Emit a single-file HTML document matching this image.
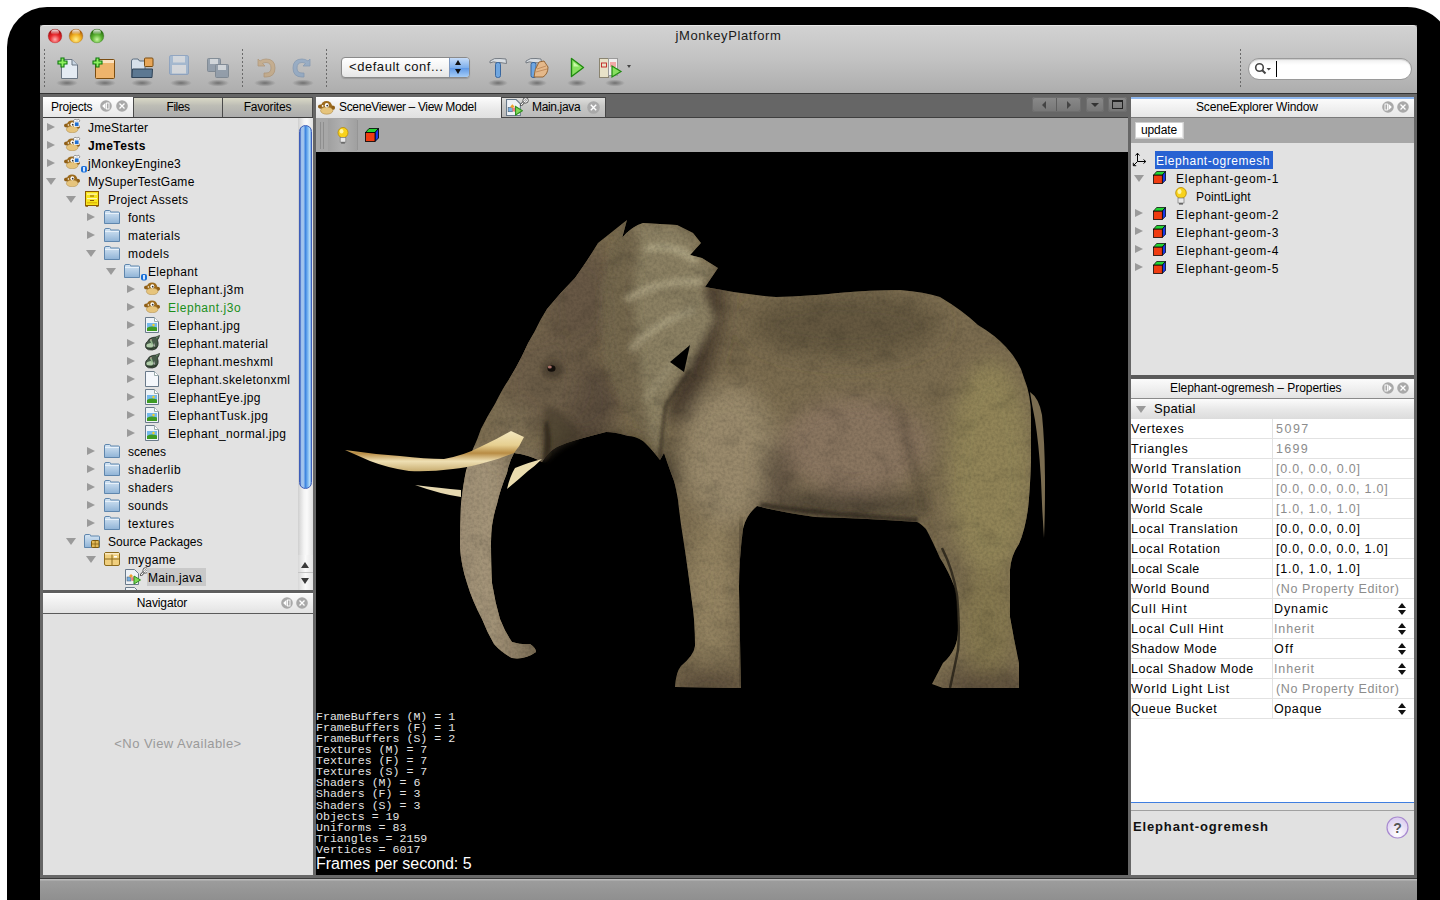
<!DOCTYPE html>
<html><head><meta charset="utf-8">
<style>
*{margin:0;padding:0;box-sizing:border-box}
html,body{width:1440px;height:900px;overflow:hidden;background:#fff;font-family:"Liberation Sans",sans-serif;}
body div,body span,body svg{position:absolute}
.t{font-size:12px;color:#000;white-space:nowrap;line-height:18px;letter-spacing:.3px}
.sep{width:1px;background-image:linear-gradient(#6a6a6a 50%,transparent 50%);background-size:1px 4px}
.ra{width:0;height:0;border-left:8px solid #9a9a9a;border-top:4.5px solid transparent;border-bottom:4.5px solid transparent}
.da{width:0;height:0;border-top:7.5px solid #9a9a9a;border-left:5px solid transparent;border-right:5px solid transparent}
</style></head><body>
<svg width="0" height="0" style="left:0;top:0">
<defs>
<linearGradient id="gfold" x1="0" y1="0" x2="0" y2="1"><stop offset="0" stop-color="#d6e6f4"/><stop offset="1" stop-color="#8fb3d6"/></linearGradient>
<symbol id="monkey" viewBox="0 0 16 13">
<ellipse cx="13.3" cy="6.8" rx="2.7" ry="2.1" fill="#8f5e16"/>
<ellipse cx="2.6" cy="5.6" rx="2.6" ry="2" fill="#8f5e16"/>
<ellipse cx="8" cy="5.2" rx="5.2" ry="4.8" fill="#9c6a1c"/>
<ellipse cx="8.2" cy="9.4" rx="5.8" ry="3.4" fill="#e6c47c" stroke="#a8823c" stroke-width=".5"/>
<ellipse cx="8.3" cy="4.3" rx="1.9" ry="2.1" fill="#fff"/><circle cx="8.7" cy="4.7" r=".9" fill="#333"/>
<circle cx="4.4" cy="5" r=".8" fill="#fff"/>
</symbol>
<symbol id="badge" viewBox="0 0 8 9">
<rect x="1" y="2" width="6" height="6.5" rx="2" fill="#1a6fd8"/><rect x="3" y="3" width="2" height="4.5" fill="#cfe4ff"/>
</symbol>
<symbol id="jbadge" viewBox="0 0 9 9">
<path d="M1 3 Q3 0 5 2 Q7 0 8 3 L7 4 L2 4Z" fill="#fff" stroke="#555" stroke-width=".6"/>
<rect x="2.5" y="4" width="4.5" height="4.5" fill="#1e6fd0" stroke="#fff" stroke-width=".8"/>
</symbol>
<symbol id="cab" viewBox="0 0 14 16">
<rect x="0.5" y="0.5" width="13" height="14" fill="#f7e41a" stroke="#8a5a00"/>
<rect x="0.5" y="14" width="2.5" height="1.8" fill="#8a5a00"/><rect x="11" y="14" width="2.5" height="1.8" fill="#8a5a00"/>
<rect x="2" y="2.5" width="10" height="1.2" fill="#fff7b8"/><rect x="2" y="7" width="10" height="1.2" fill="#fff7b8"/>
<rect x="5" y="4.5" width="4" height="1" fill="#8a5a00"/><rect x="5" y="9" width="4" height="1" fill="#8a5a00"/>
<rect x="2" y="11.3" width="10" height="1" fill="#d9a900"/>
</symbol>
<symbol id="folder" viewBox="0 0 16 14">
<path d="M0.5 2 Q0.5 0.5 2 0.5 L5.5 0.5 Q6.5 0.5 6.5 1.5 L6.5 2 L14.5 2 Q15.5 2 15.5 3 L15.5 13.5 L0.5 13.5Z" fill="url(#gfold)" stroke="#5f86ad"/>
<rect x="1" y="3" width="14" height="1" fill="#e8f1fa"/>
</symbol>
<symbol id="img" viewBox="0 0 14 16">
<path d="M0.5 0.5 L9.5 0.5 L13.5 4.5 L13.5 15.5 L0.5 15.5Z" fill="#eef3f8" stroke="#6a7a8a"/>
<path d="M9.5 0.5 L9.5 4.5 L13.5 4.5" fill="#fff" stroke="#9aa"/>
<rect x="2" y="6" width="10" height="8" fill="#74b8ea"/><path d="M2 11 Q6 8.5 12 10.5 L12 14 L2 14Z" fill="#3d9a22"/><circle cx="8.5" cy="8" r="1.2" fill="#f5d020"/>
</symbol>
<symbol id="ogre" viewBox="0 0 16 16">
<path d="M1.5 10 Q1.5 7.5 3.5 6.5 Q5 3 8.5 2.5 L12 2 L15.5 0.5 Q15 3 13.5 5 Q14.5 8 14 10.5 Q13 14.5 8.5 15 Q3.5 15.5 2 13 Q1.2 11.5 1.5 10Z" fill="#465a48" stroke="#141a14" stroke-width=".7"/>
<ellipse cx="6" cy="10.3" rx="3.6" ry="2.2" fill="#b2ceaa" transform="rotate(-10 6 10.3)"/>
<path d="M6.5 5 Q8 7 8 9.5" stroke="#8fb48a" stroke-width="1.6" fill="none"/>
<path d="M10 7.5 L11.2 11.5 L9.6 11.5Z" fill="#b0b0b0"/>
<path d="M12 3 L14.5 1.5" stroke="#7aa07a" stroke-width=".8"/>
<circle cx="7" cy="4.8" r=".7" fill="#d8a8a0"/>
<path d="M3 13 Q8 14.5 13 12" stroke="#22301f" stroke-width=".8" fill="none"/>
</symbol>
<symbol id="page" viewBox="0 0 14 16">
<path d="M0.5 0.5 L9.5 0.5 L13.5 4.5 L13.5 15.5 L0.5 15.5Z" fill="#f4f7fb" stroke="#6a7a8a"/>
<path d="M9.5 0.5 L9.5 4.5 L13.5 4.5" fill="#fff" stroke="#9aa"/>
</symbol>
<symbol id="pkg" viewBox="0 0 16 14">
<rect x="0.5" y="0.5" width="15" height="13" rx="1.5" fill="#f0cf7e" stroke="#8c6a1c"/>
<path d="M8 0.5 V13.5 M0.5 7 H15.5" stroke="#8c6a1c"/><rect x="1" y="1" width="14" height="1.5" fill="#fbeac0"/><rect x="10" y="4" width="3" height="1.5" fill="#fff"/>
</symbol>
<symbol id="srcpkg" viewBox="0 0 16 14">
<path d="M0.5 2 Q0.5 0.5 2 0.5 L5.5 0.5 Q6.5 0.5 6.5 1.5 L6.5 2 L14.5 2 Q15.5 2 15.5 3 L15.5 13.5 L0.5 13.5Z" fill="url(#gfold)" stroke="#5f86ad"/>
<rect x="7.5" y="6.5" width="7.5" height="7" rx="1" fill="#e3bb58" stroke="#7c5a10"/><path d="M11.2 6.5 V13.5 M7.5 10 H15" stroke="#7c5a10" stroke-width=".7"/>
</symbol>
<symbol id="java" viewBox="0 0 16 16">
<path d="M0.5 0.5 L9.5 0.5 L13.5 4.5 L13.5 15.5 L0.5 15.5Z" fill="#eef2f6" stroke="#6a7a8a"/>
<rect x="2" y="8" width="4" height="4" fill="#7ab0e0" stroke="#456" stroke-width=".5"/><path d="M6 5 L8 7 L6 9 L4 7Z" fill="#f0a030"/><circle cx="8" cy="10" r="2" fill="#f08080"/>
<path d="M9 7 L15.5 11 L9 15Z" fill="#7ed957" stroke="#2f8f1f"/>
</symbol>
<symbol id="wrench" viewBox="0 0 9 9"><path d="M3.8 5.2 L1.2 7.8" stroke="#333" stroke-width="2.6" stroke-linecap="round"/><path d="M3.8 5.2 L1.2 7.8" stroke="#fff" stroke-width="1.2" stroke-linecap="round"/><circle cx="5.6" cy="3.4" r="2.7" fill="#fff" stroke="#333" stroke-width=".8"/><circle cx="5.6" cy="3.4" r=".9" fill="#fff" stroke="#555" stroke-width=".6"/></symbol>
<symbol id="bulb" viewBox="0 0 12 18">
<ellipse cx="6" cy="6" rx="5.3" ry="5.5" fill="#f8d21c" stroke="#b88a00" stroke-width=".8"/><ellipse cx="4.5" cy="4.5" rx="2" ry="2.5" fill="#fff6a8"/>
<rect x="3" y="11" width="6" height="5" fill="#e8e8e8" stroke="#777" stroke-width=".7"/><rect x="4" y="16" width="4" height="1.6" fill="#666"/>
</symbol>
<symbol id="cube" viewBox="0 0 14 14">
<path d="M0.5 4.5 L4 0.5 L13.5 0.5 L10 4.5Z" fill="#22d433" stroke="#000" stroke-width=".8"/>
<path d="M10 4.5 L13.5 0.5 L13.5 10 L10 13.5Z" fill="#1838e8" stroke="#000" stroke-width=".8"/>
<rect x="0.5" y="4.5" width="9.5" height="9" fill="#f03c10" stroke="#000" stroke-width=".8"/>
</symbol>
<symbol id="closeb" viewBox="0 0 12 12"><circle cx="6" cy="6" r="5.8" fill="#a9a9a9"/><path d="M3.5 3.5 L8.5 8.5 M8.5 3.5 L3.5 8.5" stroke="#fff" stroke-width="1.3"/></symbol>
<symbol id="minb" viewBox="0 0 12 12"><circle cx="6" cy="6" r="5.8" fill="#a9a9a9"/><path d="M2.2 6 L5.5 2.8 L5.5 9.2Z" fill="#fff"/><rect x="6.5" y="3" width="2.5" height="6" fill="none" stroke="#fff" stroke-width=".9"/></symbol>
<symbol id="minb2" viewBox="0 0 12 12"><circle cx="6" cy="6" r="5.8" fill="#a9a9a9"/><path d="M9.8 6 L6.5 2.8 L6.5 9.2Z" fill="#fff"/><rect x="3" y="3" width="2.5" height="6" fill="none" stroke="#fff" stroke-width=".9"/></symbol>
</defs></svg>

<div style="left:7px;top:7px;width:1445px;height:950px;background:#000;border-radius:40px 45px 0 0"></div>
<div style="left:40px;top:25px;width:1377px;height:875px;background:#666"></div>
<div style="left:40px;top:25px;width:1377px;height:68px;background:linear-gradient(#d2d2d2,#c4c4c4 45%,#adadad);border-top:1px solid #e8e8e8;border-radius:4px 4px 0 0"></div>
<div style="left:40px;top:93px;width:1377px;height:1px;background:#333"></div>
<div class="t" style="left:0;top:27px;width:1457px;text-align:center;color:#1a1a1a;font-size:13px;letter-spacing:.6px">jMonkeyPlatform</div>
<div style="left:40px;top:875px;width:1377px;height:3px;background:#686868"></div><div style="left:40px;top:878px;width:1377px;height:1px;background:#3a3a3a"></div>
<div style="left:40px;top:879px;width:1377px;height:21px;background:linear-gradient(#bababa 0,#bababa 1px,#9c9c9c 2px,#8f8f8f)"></div>
<svg style="left:46px;top:27px" width="60" height="18" viewBox="0 0 60 18">
<defs>
<radialGradient id="tlr" cx=".5" cy=".75" r=".65"><stop offset="0" stop-color="#ffb0b0"/><stop offset=".55" stop-color="#e8282c"/><stop offset="1" stop-color="#a80c10"/></radialGradient>
<radialGradient id="tly" cx=".5" cy=".75" r=".65"><stop offset="0" stop-color="#fff090"/><stop offset=".55" stop-color="#f0b020"/><stop offset="1" stop-color="#b06008"/></radialGradient>
<radialGradient id="tlg" cx=".5" cy=".75" r=".65"><stop offset="0" stop-color="#c8f8a0"/><stop offset=".55" stop-color="#58b030"/><stop offset="1" stop-color="#2a7010"/></radialGradient>
<linearGradient id="tlh" x1="0" y1="0" x2="0" y2="1"><stop offset="0" stop-color="#fff" stop-opacity=".9"/><stop offset="1" stop-color="#fff" stop-opacity="0"/></linearGradient>
</defs>
<circle cx="9" cy="9" r="6.9" fill="url(#tlr)" stroke="#8a2020" stroke-width=".5" stroke-opacity=".5"/>
<circle cx="30" cy="9" r="6.9" fill="url(#tly)" stroke="#8a5010" stroke-width=".5" stroke-opacity=".5"/>
<circle cx="51" cy="9" r="6.9" fill="url(#tlg)" stroke="#206010" stroke-width=".5" stroke-opacity=".5"/>
<ellipse cx="9" cy="5.2" rx="4" ry="2.6" fill="url(#tlh)"/>
<ellipse cx="30" cy="5.2" rx="4" ry="2.6" fill="url(#tlh)"/>
<ellipse cx="51" cy="5.2" rx="4" ry="2.6" fill="url(#tlh)"/>
</svg>

<div class="sep" style="left:44px;top:49px;height:38px"></div>
<div class="sep" style="left:242px;top:49px;height:38px"></div>
<div class="sep" style="left:326px;top:49px;height:38px"></div>
<div class="sep" style="left:1240px;top:49px;height:38px"></div>
<!-- icon shadows -->
<svg style="left:50px;top:76px" width="590" height="14">
<defs><radialGradient id="sh"><stop offset="0" stop-color="#000" stop-opacity=".38"/><stop offset="1" stop-color="#000" stop-opacity="0"/></radialGradient></defs>
<ellipse cx="17" cy="7" rx="11" ry="3.5" fill="url(#sh)"/>
<ellipse cx="55" cy="7" rx="11" ry="3.5" fill="url(#sh)"/>
<ellipse cx="92" cy="7" rx="11" ry="3.5" fill="url(#sh)"/>
<ellipse cx="131" cy="7" rx="11" ry="3.5" fill="url(#sh)"/>
<ellipse cx="168" cy="7" rx="11" ry="3.5" fill="url(#sh)"/>
<ellipse cx="215" cy="7" rx="11" ry="3.5" fill="url(#sh)"/>
<ellipse cx="253" cy="7" rx="11" ry="3.5" fill="url(#sh)"/>
<ellipse cx="448" cy="7" rx="10" ry="3.5" fill="url(#sh)"/>
<ellipse cx="487" cy="7" rx="10" ry="3.5" fill="url(#sh)"/>
<ellipse cx="527" cy="7" rx="10" ry="3.5" fill="url(#sh)"/>
<ellipse cx="565" cy="7" rx="10" ry="3.5" fill="url(#sh)"/>
</svg>
<!-- new file -->
<svg style="left:57px;top:57px" width="22" height="22" viewBox="0 0 22 22">
<path d="M4.5 2.5 L15 2.5 L20.5 8 L20.5 21.5 L4.5 21.5Z" fill="#e4ebf3" stroke="#6b7683"/><path d="M15 2.5 L15 8 L20.5 8" fill="#c9d6e4" stroke="#6b7683"/>
<path d="M4 1 H7 V4 H10 V7 H7 V10 H4 V7 H1 V4 H4Z" fill="#8ff060" stroke="#0d7a0d" stroke-width="1.1"/>
</svg>
<!-- new project -->
<svg style="left:92px;top:57px" width="24" height="22" viewBox="0 0 24 22">
<rect x="3.5" y="2.5" width="19" height="19" rx="1" fill="#eeb46c" stroke="#7a4c10"/><rect x="4" y="3" width="18" height="3" fill="#fbe2c0"/>
<path d="M4 1 H7 V4 H10 V7 H7 V10 H4 V7 H1 V4 H4Z" fill="#8ff060" stroke="#0d7a0d" stroke-width="1.1"/>
</svg>
<!-- open project -->
<svg style="left:130px;top:56px" width="24" height="23" viewBox="0 0 24 23">
<path d="M1.5 5 Q1.5 3 3.5 3 L8 3 L9.5 5 L15 5 L15 21.5 L1.5 21.5Z" fill="#d6e0ea" stroke="#5d6e80"/>
<rect x="14.5" y="2" width="8.5" height="8.5" rx="1" fill="#e7a658" stroke="#7a4c10"/>
<path d="M2.5 13 L22.5 13 L22 21.5 L2 21.5Z" fill="#5c7892" stroke="#2f4256"/>
</svg>
<!-- save (disabled) -->
<svg style="left:168px;top:54px" width="22" height="22" viewBox="0 0 22 22" opacity=".55">
<rect x="1.5" y="1.5" width="19" height="19" rx="1.5" fill="#8fb3dc" stroke="#6b8fc0"/><rect x="5" y="2" width="12" height="6.5" fill="#e0e8f2"/><rect x="4" y="11" width="14" height="8.5" fill="#e8edf4"/>
</svg>
<!-- save all -->
<svg style="left:206px;top:57px" width="24" height="22" viewBox="0 0 24 22" opacity=".6">
<rect x="1.5" y="1.5" width="13" height="13" rx="1" fill="#7a8ca0" stroke="#5a6a7a"/><rect x="4" y="2" width="8" height="5" fill="#dde4ea"/>
<rect x="9.5" y="7.5" width="13" height="13" rx="1" fill="#7a8ca0" stroke="#5a6a7a"/><rect x="12" y="8" width="8" height="5" fill="#dde4ea"/>
</svg>
<!-- undo -->
<svg style="left:254px;top:56px" width="23" height="22" viewBox="0 0 23 22" opacity=".55">
<path d="M4 3 V10 H11 L8.5 7.5 Q10 6.5 12 6.5 Q17 6.5 17 12 Q17 17 12 17 L10 17 V21 L12 21 Q21 21 21 12 Q21 3 12 3 Q8.5 3 6 5Z" fill="#c9a06a" stroke="#a37a48" stroke-width=".8"/>
</svg>
<!-- redo -->
<svg style="left:291px;top:56px" width="23" height="22" viewBox="0 0 23 22" opacity=".55">
<path d="M19 3 V10 H12 L14.5 7.5 Q13 6.5 11 6.5 Q6 6.5 6 12 Q6 17 11 17 L13 17 V21 L11 21 Q2 21 2 12 Q2 3 11 3 Q14.5 3 17 5Z" fill="#7a9ec8" stroke="#5a7ea8" stroke-width=".8"/>
</svg>
<!-- config combo -->
<div style="left:341px;top:57px;width:129px;height:21px;border-radius:4px;border:1px solid #8a8a8a;background:linear-gradient(#ffffff,#f4f4f4 50%,#e6e6e6);box-shadow:0 1px 1px rgba(0,0,0,.15)"></div>
<div style="left:449px;top:58px;width:20px;height:19px;border-radius:0 3px 3px 0;background:linear-gradient(#c6dcf8,#7fb0ec 50%,#5e98e6 52%,#a6cdf6);border-left:1px solid #7d98c0"></div>
<div style="left:455px;top:60px;width:0;height:0;border-bottom:5px solid #111;border-left:3.5px solid transparent;border-right:3.5px solid transparent"></div>
<div style="left:455px;top:69px;width:0;height:0;border-top:5px solid #111;border-left:3.5px solid transparent;border-right:3.5px solid transparent"></div>
<div class="t" style="left:349px;top:58px;font-size:13px;letter-spacing:.55px;color:#111">&lt;default conf...</div>
<!-- build hammer -->
<svg style="left:488px;top:57px" width="20" height="21" viewBox="0 0 20 21">
<path d="M2 4 Q6 0.5 12 1.5 L18 2 L18.5 6.5 L12 5.5 L11 5.5 L9 5.5 Q5 4 2 6Z" fill="#d8dde2" stroke="#6c737a" stroke-width=".9"/>
<rect x="7.5" y="5.5" width="5" height="15" rx="2" fill="#6fa6e0" stroke="#2f5f9a" stroke-width=".9"/>
</svg>
<!-- clean build -->
<svg style="left:525px;top:57px" width="24" height="21" viewBox="0 0 24 21">
<path d="M1 4 Q5 0.5 11 1.5 L16 2 L16.5 6 L8 5.5 Q4 4 1 6Z" fill="#d8dde2" stroke="#6c737a" stroke-width=".9"/>
<rect x="6" y="5.5" width="5" height="15" rx="2" fill="#6fa6e0" stroke="#2f5f9a" stroke-width=".9"/>
<path d="M14 5 L19 4 L23 10 Q23 17 18 20 L9 20 Q9 13 14 5Z" fill="#e4b88a" stroke="#8d5c2a" stroke-width=".9"/>
<path d="M12 12 L21 9 M11 15 L22 12" stroke="#b98354" stroke-width=".8"/>
</svg>
<!-- run -->
<svg style="left:570px;top:57px" width="15" height="21" viewBox="0 0 15 21">
<path d="M1.5 1.5 L13.5 10.5 L1.5 19.5Z" fill="#88e060" stroke="#208a10" stroke-width="1.4" stroke-linejoin="round"/>
<path d="M3.5 5 L9 9.5 L3.5 9.5Z" fill="#c8f8a8"/>
</svg>
<!-- profile -->
<svg style="left:598px;top:56px" width="26" height="23" viewBox="0 0 26 23">
<rect x="1.5" y="2.5" width="9" height="19" fill="#e8e2c8" stroke="#8a8470"/><rect x="10.5" y="2.5" width="9" height="17" fill="#f0eeee" stroke="#9a9a9a"/>
<rect x="3.5" y="7" width="5" height="4" fill="none" stroke="#c02020" stroke-width=".9"/><rect x="12" y="6" width="6" height="5" fill="#f2a8a8"/>
<path d="M14 10 L23 15.5 L14 21Z" fill="#88e060" stroke="#208a10" stroke-width="1.2"/>
</svg>
<div style="left:627px;top:65px;width:0;height:0;border-top:3px solid #444;border-left:2.5px solid transparent;border-right:2.5px solid transparent"></div>
<!-- search -->
<div style="left:1248px;top:58px;width:164px;height:22px;border-radius:11px;background:linear-gradient(#eeeeee,#ffffff 30%);border:1px solid #9a9a9a;box-shadow:inset 0 1px 1px rgba(0,0,0,.15)"></div>
<svg style="left:1254px;top:62px" width="20" height="14" viewBox="0 0 20 14">
<circle cx="5.5" cy="5.5" r="3.8" fill="none" stroke="#444" stroke-width="1.6"/><path d="M8 8 L11.5 11.5" stroke="#444" stroke-width="2"/>
<path d="M12.5 6 L17 6 L14.75 8.5Z" fill="#444"/>
</svg>
<div style="left:1276px;top:61px;width:1px;height:16px;background:#000"></div>

<div style="left:43px;top:118px;width:270px;height:472px;background:#e2e2e2"></div>
<div style="left:43px;top:97px;width:90px;height:21px;background:linear-gradient(#fdfdfd,#e6e6e6);border-top:1px solid #fff"></div>
<div class="t" style="left:51px;top:98px;letter-spacing:-.25px">Projects</div>
<svg style="left:100px;top:100px" width="12" height="12"><use href="#minb"/></svg>
<svg style="left:116px;top:100px" width="12" height="12"><use href="#closeb"/></svg>
<div style="left:133px;top:97px;width:180px;height:21px;background:#4a4a4a"></div>
<div style="left:134px;top:98px;width:88px;height:19px;background:linear-gradient(#d9d8c6,#bdbdb5 40%,#acacac)"></div>
<div style="left:223px;top:98px;width:89px;height:19px;background:linear-gradient(#d9d8c6,#bdbdb5 40%,#acacac)"></div>
<div class="t" style="left:134px;top:98px;width:88px;text-align:center;letter-spacing:-.5px">Files</div>
<div class="t" style="left:223px;top:98px;width:89px;text-align:center;letter-spacing:-.2px">Favorites</div>
<div style="left:43px;top:117px;width:270px;height:1px;background:#3f3f3f"></div>
<div class="ra" style="left:47px;top:123px"></div>
<svg style="left:64px;top:120px" width="16" height="13"><use href="#monkey"/></svg>
<svg style="left:72px;top:118px" width="9" height="9"><use href="#jbadge"/></svg>
<div class="t" style="left:88px;top:119px;letter-spacing:0.146px">JmeStarter</div>
<div class="ra" style="left:47px;top:141px"></div>
<svg style="left:64px;top:138px" width="16" height="13"><use href="#monkey"/></svg>
<svg style="left:72px;top:136px" width="9" height="9"><use href="#jbadge"/></svg>
<div class="t" style="left:88px;top:137px;letter-spacing:0.417px;font-weight:bold">JmeTests</div>
<div class="ra" style="left:47px;top:159px"></div>
<svg style="left:64px;top:156px" width="16" height="13"><use href="#monkey"/></svg>
<svg style="left:72px;top:154px" width="9" height="9"><use href="#jbadge"/></svg>
<svg style="left:80px;top:164px" width="8" height="9"><use href="#badge"/></svg>
<div class="t" style="left:88px;top:155px;letter-spacing:0.313px">jMonkeyEngine3</div>
<div class="da" style="left:46px;top:178px"></div>
<svg style="left:64px;top:174px" width="16" height="13"><use href="#monkey"/></svg>
<div class="t" style="left:88px;top:173px;letter-spacing:0.257px">MySuperTestGame</div>
<div class="da" style="left:66px;top:196px"></div>
<svg style="left:85px;top:191px" width="14" height="16"><use href="#cab"/></svg>
<div class="t" style="left:108px;top:191px;letter-spacing:0.305px">Project Assets</div>
<div class="ra" style="left:87px;top:213px"></div>
<svg style="left:104px;top:210px" width="16" height="14"><use href="#folder"/></svg>
<div class="t" style="left:128px;top:209px;letter-spacing:0.246px">fonts</div>
<div class="ra" style="left:87px;top:231px"></div>
<svg style="left:104px;top:228px" width="16" height="14"><use href="#folder"/></svg>
<div class="t" style="left:128px;top:227px;letter-spacing:0.414px">materials</div>
<div class="da" style="left:86px;top:250px"></div>
<svg style="left:104px;top:246px" width="16" height="14"><use href="#folder"/></svg>
<div class="t" style="left:128px;top:245px;letter-spacing:0.463px">models</div>
<div class="da" style="left:106px;top:268px"></div>
<svg style="left:124px;top:264px" width="16" height="14"><use href="#folder"/></svg>
<svg style="left:140px;top:272px" width="8" height="9"><use href="#badge"/></svg>
<div class="t" style="left:148px;top:263px;letter-spacing:0.318px">Elephant</div>
<div class="ra" style="left:127px;top:285px"></div>
<svg style="left:144px;top:282px" width="16" height="13"><use href="#monkey"/></svg>
<div class="t" style="left:168px;top:281px;letter-spacing:0.523px">Elephant.j3m</div>
<div class="ra" style="left:127px;top:303px"></div>
<svg style="left:144px;top:300px" width="16" height="13"><use href="#monkey"/></svg>
<div class="t" style="left:168px;top:299px;letter-spacing:0.533px;color:#1a8f1a">Elephant.j3o</div>
<div class="ra" style="left:127px;top:321px"></div>
<svg style="left:145px;top:317px" width="14" height="16"><use href="#img"/></svg>
<div class="t" style="left:168px;top:317px;letter-spacing:0.479px">Elephant.jpg</div>
<div class="ra" style="left:127px;top:339px"></div>
<svg style="left:144px;top:335px" width="16" height="16"><use href="#ogre"/></svg>
<div class="t" style="left:168px;top:335px;letter-spacing:0.413px">Elephant.material</div>
<div class="ra" style="left:127px;top:357px"></div>
<svg style="left:144px;top:353px" width="16" height="16"><use href="#ogre"/></svg>
<div class="t" style="left:168px;top:353px;letter-spacing:0.419px">Elephant.meshxml</div>
<div class="ra" style="left:127px;top:375px"></div>
<svg style="left:145px;top:371px" width="14" height="16"><use href="#page"/></svg>
<div class="t" style="left:168px;top:371px;letter-spacing:0.417px">Elephant.skeletonxml</div>
<div class="ra" style="left:127px;top:393px"></div>
<svg style="left:145px;top:389px" width="14" height="16"><use href="#img"/></svg>
<div class="t" style="left:168px;top:389px;letter-spacing:0.357px">ElephantEye.jpg</div>
<div class="ra" style="left:127px;top:411px"></div>
<svg style="left:145px;top:407px" width="14" height="16"><use href="#img"/></svg>
<div class="t" style="left:168px;top:407px;letter-spacing:0.515px">ElephantTusk.jpg</div>
<div class="ra" style="left:127px;top:429px"></div>
<svg style="left:145px;top:425px" width="14" height="16"><use href="#img"/></svg>
<div class="t" style="left:168px;top:425px;letter-spacing:0.44px">Elephant_normal.jpg</div>
<div class="ra" style="left:87px;top:447px"></div>
<svg style="left:104px;top:444px" width="16" height="14"><use href="#folder"/></svg>
<div class="t" style="left:128px;top:443px;letter-spacing:-0.006px">scenes</div>
<div class="ra" style="left:87px;top:465px"></div>
<svg style="left:104px;top:462px" width="16" height="14"><use href="#folder"/></svg>
<div class="t" style="left:128px;top:461px;letter-spacing:0.487px">shaderlib</div>
<div class="ra" style="left:87px;top:483px"></div>
<svg style="left:104px;top:480px" width="16" height="14"><use href="#folder"/></svg>
<div class="t" style="left:128px;top:479px;letter-spacing:0.383px">shaders</div>
<div class="ra" style="left:87px;top:501px"></div>
<svg style="left:104px;top:498px" width="16" height="14"><use href="#folder"/></svg>
<div class="t" style="left:128px;top:497px;letter-spacing:0.259px">sounds</div>
<div class="ra" style="left:87px;top:519px"></div>
<svg style="left:104px;top:516px" width="16" height="14"><use href="#folder"/></svg>
<div class="t" style="left:128px;top:515px;letter-spacing:0.473px">textures</div>
<div class="da" style="left:66px;top:538px"></div>
<svg style="left:84px;top:534px" width="16" height="14"><use href="#srcpkg"/></svg>
<div class="t" style="left:108px;top:533px;letter-spacing:0.038px">Source Packages</div>
<div class="da" style="left:86px;top:556px"></div>
<svg style="left:104px;top:552px" width="16" height="14"><use href="#pkg"/></svg>
<div class="t" style="left:128px;top:551px;letter-spacing:0.337px">mygame</div>
<svg style="left:125px;top:569px" width="16" height="16"><use href="#java"/></svg>
<svg style="left:140px;top:567px" width="9" height="9"><use href="#wrench"/></svg>
<div style="left:147px;top:568px;width:59px;height:18px;background:#c9c9c9"></div>
<div class="t" style="left:148px;top:569px;letter-spacing:0.33px">Main.java</div>
<svg style="left:125px;top:587px" width="16" height="16"><use href="#java"/></svg>
<div style="left:43px;top:590px;width:270px;height:3px;background:#5e5e5e"></div>
<div style="left:298px;top:118px;width:15px;height:472px;background:linear-gradient(90deg,#cfcfcf,#f4f4f4 40%,#fafafa 60%,#e0e0e0)"></div>
<div style="left:299px;top:125px;width:13px;height:364px;border-radius:7px;background:linear-gradient(90deg,#3a5fc0 0,#9cc0ea 1.5px,#a7c8ee 30%,#3f86e0 50%,#86c0f4 75%,#b6dcf8 88%,#6aa0e0);border:1px solid #3d5db8"></div>
<div style="left:298px;top:555px;width:15px;height:35px;background:linear-gradient(90deg,#d8d8d8,#fafafa 50%,#e4e4e4)"></div>
<div style="left:298px;top:572px;width:15px;height:1px;background:#c4c4c4"></div>
<div style="left:301px;top:562px;width:0;height:0;border-bottom:6px solid #3a3a3a;border-left:4.5px solid transparent;border-right:4.5px solid transparent"></div>
<div style="left:301px;top:578px;width:0;height:0;border-top:6px solid #3a3a3a;border-left:4.5px solid transparent;border-right:4.5px solid transparent"></div>
<div style="left:43px;top:593px;width:270px;height:20px;background:linear-gradient(#fafafa,#e3e3e3);border-top:1px solid #fff"></div>
<div style="left:43px;top:613px;width:270px;height:1px;background:#5a5a5a"></div>
<div class="t" style="left:43px;top:594px;width:238px;text-align:center;letter-spacing:-.1px">Navigator</div>
<svg style="left:281px;top:597px" width="12" height="12"><use href="#minb"/></svg>
<svg style="left:296px;top:597px" width="12" height="12"><use href="#closeb"/></svg>
<div style="left:43px;top:614px;width:270px;height:261px;background:#e1e1e1"></div>
<div class="t" style="left:43px;top:735px;width:270px;text-align:center;color:#9a9a9a;font-size:13px;letter-spacing:.45px">&lt;No View Available&gt;</div>
<!-- editor tab strip -->
<div style="left:316px;top:117px;width:812px;height:1px;background:#3f3f3f"></div>
<div style="left:316px;top:97px;width:185px;height:21px;background:linear-gradient(#fbfbfb,#e8e8e8 60%,#e0e0e0);border-top:1px solid #fff"></div>
<svg style="left:318px;top:100px" width="17" height="15"><use href="#monkey"/></svg>
<div class="t" style="left:339px;top:98px;letter-spacing:-.35px">SceneViewer – View Model</div>
<div style="left:501px;top:97px;width:105px;height:21px;background:#454545"></div>
<div style="left:502px;top:98px;width:103px;height:19px;background:linear-gradient(#dededc,#c8c8c6 40%,#b9b9b9)"></div>
<svg style="left:506px;top:99px" width="17" height="17"><use href="#java"/></svg>
<svg style="left:520px;top:97px" width="9" height="9"><use href="#wrench"/></svg>
<div class="t" style="left:532px;top:98px;letter-spacing:-.35px">Main.java</div>
<svg style="left:587px;top:101px" width="13" height="13"><use href="#closeb"/></svg>
<!-- tab controls -->
<div style="left:1032px;top:97px;width:49px;height:15px;border-radius:3px;background:linear-gradient(#8a8a8a,#767676);box-shadow:inset 0 0 0 1px #6e6e6e"></div>
<div style="left:1056px;top:98px;width:1px;height:13px;background:#5e5e5e"></div>
<div style="left:1042px;top:101px;width:0;height:0;border-right:4px solid #444;border-top:4px solid transparent;border-bottom:4px solid transparent"></div>
<div style="left:1067px;top:101px;width:0;height:0;border-left:4px solid #444;border-top:4px solid transparent;border-bottom:4px solid transparent"></div>
<div style="left:1086px;top:97px;width:18px;height:15px;border-radius:3px;background:linear-gradient(#8a8a8a,#767676);box-shadow:inset 0 0 0 1px #6e6e6e"></div>
<div style="left:1091px;top:103px;width:0;height:0;border-top:4px solid #333;border-left:4px solid transparent;border-right:4px solid transparent"></div>
<div style="left:1108px;top:97px;width:19px;height:15px;border-radius:3px;background:linear-gradient(#8a8a8a,#767676);box-shadow:inset 0 0 0 1px #6e6e6e"></div>
<div style="left:1112px;top:100px;width:11px;height:9px;border:1px solid #222;border-top-width:2px"></div>
<!-- editor toolbar -->
<div style="left:316px;top:118px;width:812px;height:34px;background:#a7a7a7"></div>
<div style="left:320px;top:122px;width:1px;height:27px;background:#8e8e8e"></div>
<div style="left:323px;top:122px;width:1px;height:27px;background:#8e8e8e"></div>
<div style="left:328px;top:119px;width:29px;height:32px;background:linear-gradient(90deg,#a0a0a0,#b0b0b0 50%,#a0a0a0)"></div>
<div style="left:357px;top:120px;width:1px;height:30px;background:#959595"></div>
<svg style="left:337px;top:127px" width="12" height="17"><use href="#bulb"/></svg>
<svg style="left:365px;top:128px" width="14" height="14"><use href="#cube"/></svg>
<!-- 3d view -->
<div style="left:316px;top:152px;width:812px;height:723px;background:#000"></div>
<div style="left:316px;top:711px;width:200px;height:160px;font-family:'Liberation Mono',monospace;font-size:11.6px;line-height:11.07px;color:#e4e4e4;white-space:pre">FrameBuffers (M) = 1
FrameBuffers (F) = 1
FrameBuffers (S) = 2
Textures (M) = 7
Textures (F) = 7
Textures (S) = 7
Shaders (M) = 6
Shaders (F) = 3
Shaders (S) = 3
Objects = 19
Uniforms = 83
Triangles = 2159
Vertices = 6017</div>
<div class="t" style="left:316px;top:854px;font-size:16px;line-height:20px;color:#fff;letter-spacing:0">Frames per second: 5</div>

<svg style="left:316px;top:152px" width="812" height="723" viewBox="316 152 812 723">
<defs>
<filter id="bl10" x="-50%" y="-50%" width="200%" height="200%"><feGaussianBlur stdDeviation="10"/></filter>
<filter id="bl5" x="-50%" y="-50%" width="200%" height="200%"><feGaussianBlur stdDeviation="5"/></filter>
<filter id="bl3" x="-50%" y="-50%" width="200%" height="200%"><feGaussianBlur stdDeviation="3"/></filter>
<filter id="bl2" x="-50%" y="-50%" width="200%" height="200%"><feGaussianBlur stdDeviation="1.5"/></filter>
<filter id="tex2" x="0" y="0" width="100%" height="100%"><feTurbulence type="fractalNoise" baseFrequency=".04 .06" numOctaves="3" seed="7"/><feColorMatrix values="0 0 0 0 0  0 0 0 0 0  0 0 0 0 0  0 0 0 -2.2 1.1"/></filter>
<filter id="tex" x="0" y="0" width="100%" height="100%"><feTurbulence type="fractalNoise" baseFrequency=".35" numOctaves="2" seed="3"/><feColorMatrix values="0 0 0 0 0  0 0 0 0 0  0 0 0 0 0  0 0 0 -1.6 1.05"/></filter>
<clipPath id="eclip"><path d="M598 243 L627 220 L622 238 Q632 226 643 223 L677 225 L693 233 L701 243 L690 255 L702 258 L718 268 L703 290 L705 287 Q740 294 776 297 Q810 296 838 293 Q870 290 900 290 Q925 292 940 297 Q962 310 978 325 Q995 335 1006 347 Q1020 362 1024 378 Q1031 395 1031 416 L1031 462 Q1030 490 1028 509 Q1025 530 1019 544 Q1011 555 1010 570 L1010 617 Q1014 640 1019 663 L1019 688 L943 688 L932 684 L943 663 Q958 650 958 630 Q958 600 955 588 Q948 570 940 558 Q932 540 926 529 Q920 523 917 522 Q860 518 815 517 Q780 512 757 506 Q746 515 743 529 Q739 560 739 588 Q740 640 741 688 L675 687 Q676 672 681 666 Q694 655 695 646 Q695 620 692 602 Q688 570 684 544 Q680 520 678 500 Q676 488 674 481 Q668 465 664 453 L660 460 Q650 447 643 441 Q635 436 628 436 Q615 432 606 432 Q590 436 576 440 Q565 443 557 447 Q548 452 542 462 Q530 455 514 453 Q509 462 507 473 Q500 490 497 504 Q491 522 491 542 Q491 565 492 583 Q495 602 500 619 Q505 632 512 642 Q522 645 530 644 Q536 648 536 652 Q525 660 512 658 Q502 653 494 644 Q487 632 482 619 Q472 600 467 583 Q461 565 460 547 Q460 525 461 504 Q463 485 466 471 Q470 458 473 449 Q478 438 481 429 Q488 415 495 404 Q503 388 508 381 Q516 368 522 356 Q528 342 535 331 Q540 320 547 309 Q560 293 575 278 Q588 260 598 243 Z"/></clipPath>
<linearGradient id="tusk" x1="0" y1="0" x2="0" y2="1"><stop offset="0" stop-color="#f4e8c0"/><stop offset=".35" stop-color="#e6cf90"/><stop offset=".55" stop-color="#b88c44"/><stop offset=".75" stop-color="#efe0b4"/><stop offset="1" stop-color="#c8ad70"/></linearGradient>
<linearGradient id="trunkg" x1="0" y1="0" x2="1" y2="0"><stop offset="0" stop-color="#988870"/><stop offset=".45" stop-color="#a6967a"/><stop offset="1" stop-color="#6e604a"/></linearGradient>
</defs>
<g clip-path="url(#eclip)">
<rect x="316" y="152" width="812" height="723" fill="#7c6d50"/>
<rect x="440" y="450" width="110" height="230" fill="url(#trunkg)" filter="url(#bl5)"/>
<g filter="url(#bl10)">
<ellipse cx="580" cy="300" rx="40" ry="55" fill="#675844"/>
<ellipse cx="585" cy="400" rx="35" ry="40" fill="#5c4e3c"/>
<ellipse cx="540" cy="380" rx="40" ry="50" fill="#6e5f48"/>
<ellipse cx="510" cy="430" rx="22" ry="28" fill="#7e6f55"/>
<ellipse cx="695" cy="350" rx="20" ry="80" fill="#44392c" transform="rotate(15 695 350)"/>
<ellipse cx="730" cy="455" rx="48" ry="70" fill="#9a8a6c"/>
<ellipse cx="845" cy="325" rx="95" ry="32" fill="#65593f"/>
<ellipse cx="855" cy="445" rx="75" ry="48" fill="#8a7660"/>
<ellipse cx="990" cy="470" rx="42" ry="110" fill="#928558"/>
<ellipse cx="712" cy="590" rx="24" ry="70" fill="#948462"/>
<ellipse cx="988" cy="620" rx="28" ry="55" fill="#85784f"/>
<ellipse cx="840" cy="505" rx="90" ry="12" fill="#4a4030"/>
<ellipse cx="600" cy="447" rx="55" ry="10" fill="#3a3224"/>
<ellipse cx="945" cy="600" rx="8" ry="50" fill="#4a4030"/>
<ellipse cx="748" cy="600" rx="6" ry="70" fill="#5a4e3a"/>
<ellipse cx="710" cy="685" rx="40" ry="14" fill="#5c4e3a"/>
<ellipse cx="985" cy="685" rx="45" ry="14" fill="#5c4e3a"/>
<ellipse cx="668" cy="470" rx="10" ry="25" fill="#3e3528"/>
<ellipse cx="778" cy="475" rx="16" ry="34" fill="#655644"/>
<ellipse cx="940" cy="615" rx="12" ry="55" fill="#8a7b5a"/>
</g>
<path d="M898 405 Q912 460 926 515" stroke="#3e3428" stroke-width="8" fill="none" opacity=".4" filter="url(#bl5)"/>
<path d="M760 505 Q840 516 918 520" stroke="#2e261c" stroke-width="5" fill="none" opacity=".7" filter="url(#bl2)"/>
<path d="M742 520 Q739 600 741 688" stroke="#3a3024" stroke-width="7" fill="none" opacity=".5" filter="url(#bl3)"/>
<!-- ear -->
<path d="M627 220 Q612 250 605 290 Q603 330 610 365 Q622 400 640 425 L660 460 Q664 420 668 400 L685 375 L716 318 L703 290 L718 268 L702 258 L690 255 L701 243 L693 233 L677 225 L643 223 Q632 226 622 238Z" fill="#8c8164" filter="url(#bl5)"/>
<path d="M627 220 Q612 250 605 290 Q603 330 610 365 Q622 400 640 425 L650 440 Q640 380 636 330 Q632 280 640 240 Z" fill="#75684e" filter="url(#bl5)"/>
<g filter="url(#bl3)" opacity=".7">
<path d="M645 250 Q672 240 697 262" stroke="#c4bb98" stroke-width="7" fill="none"/>
<path d="M625 300 Q660 278 703 282" stroke="#bab090" stroke-width="7" fill="none"/>
<path d="M630 350 Q655 322 695 310" stroke="#b8ae8e" stroke-width="7" fill="none"/>
<path d="M645 400 Q660 380 675 360" stroke="#a09678" stroke-width="6" fill="none"/>
</g>
<path d="M626 224 Q612 252 606 290 Q603 330 610 365 Q622 400 640 425 L660 458" stroke="#3a3024" stroke-width="3" fill="none" opacity=".3" filter="url(#bl3)"/>
<path d="M660 460 Q662 430 666 405 L690 370" stroke="#2a2418" stroke-width="4" fill="none" opacity=".5" filter="url(#bl2)"/>
<rect x="316" y="152" width="812" height="723" filter="url(#tex)" opacity=".15"/>
<rect x="316" y="152" width="812" height="723" filter="url(#tex2)" opacity=".13"/>
</g>
<path d="M1030 392 Q1039 398 1042 415 Q1045 445 1045 485 Q1045 515 1044 538 Q1042 510 1041 480 Q1039 445 1035 420 Q1032 405 1030 392Z" fill="#7a6c50"/>
<path d="M942 548 Q953 570 957 595 Q960 630 958 650 Q954 670 950 688" stroke="#1e1a12" stroke-width="2.5" fill="none" opacity=".75"/>
<!-- notch -->
<path d="M670 362 L690 345 L684 372Z" fill="#000"/>
<!-- eye -->
<ellipse cx="553" cy="370" rx="11" ry="9" fill="#2e261a" opacity=".55" filter="url(#bl3)"/>
<ellipse cx="551.5" cy="368.5" rx="4" ry="3.3" fill="#120e0a"/><ellipse cx="549.8" cy="367" rx="2" ry="1.5" fill="#a87068"/>
<!-- mouth -->
<path d="M545 405 Q565 410 580 432 L575 441 Q560 445 545 462 Q540 440 545 405Z" fill="#3e3426" opacity=".55" filter="url(#bl3)"/>
<path d="M548 420 Q553 440 550 455 Q546 462 542 462 Q546 445 544 425Z" fill="#2a2418" opacity=".7" filter="url(#bl2)"/>
<!-- tusks -->
<path d="M345 450 Q372 454 400 456 Q425 459 444 459 Q465 455 480 447 Q497 439 511 431 L524 437 Q520 446 514 453 Q497 460 480 464 Q465 468 453 469 Q430 472 409 471 Q388 468 370 461 Z" fill="url(#tusk)"/>
<path d="M415 485 Q440 488 461 490 L461 497 Q440 494 415 485Z" fill="#e6d8b0"/>
<path d="M507 489 Q510 476 515 468 Q530 462 542 459 Q535 466 528 471 Q518 480 507 489Z" fill="#eadcae"/>
</svg>

<div style="left:1131px;top:97px;width:283px;height:2px;background:#8fb8f0"></div>
<div style="left:1131px;top:99px;width:283px;height:18px;background:linear-gradient(#fbfbfb,#e6e6e6)"></div>
<div style="left:1131px;top:117px;width:283px;height:1px;background:#7a7a7a"></div>
<div class="t" style="left:1196px;top:98px;letter-spacing:-0.144px">SceneExplorer Window</div>
<svg style="left:1382px;top:101px" width="12" height="12"><use href="#minb2"/></svg>
<svg style="left:1397px;top:101px" width="12" height="12"><use href="#closeb"/></svg>
<div style="left:1131px;top:118px;width:283px;height:25px;background:#a7a7a7"></div>
<div style="left:1135px;top:122px;width:49px;height:17px;background:#fff;border:1px solid #cfcfcf;box-shadow:inset -1px -1px 0 #e8e8e8"></div>
<div class="t" style="left:1141px;top:121px;letter-spacing:-0.121px">update</div>
<div style="left:1131px;top:143px;width:283px;height:232px;background:#e2e2e2"></div>
<svg style="left:1132px;top:152px" width="16" height="15" viewBox="0 0 16 15"><path d="M5.5 1.5 V9.5 H13.5 M1.5 13.5 L5.5 9.5" stroke="#000" stroke-width="1" fill="none"/><path d="M3.5 3.5 L5.5 1.2 L7.5 3.5 M11.5 7.5 L13.8 9.5 L11.5 11.5 M1.3 10.8 L1.3 13.7 L4.2 13.7" stroke="#000" stroke-width="1" fill="none"/></svg>
<div style="left:1155px;top:151px;width:118px;height:18px;background:#2862d2"></div>
<div class="t" style="left:1156px;top:152px;color:#fff;letter-spacing:0.548px">Elephant-ogremesh</div>
<div class="da" style="left:1134px;top:175px"></div>
<svg style="left:1153px;top:171px" width="13" height="13"><use href="#cube"/></svg>
<div class="t" style="left:1176px;top:170px;letter-spacing:0.746px">Elephant-geom-1</div>
<svg style="left:1175px;top:187px" width="12" height="18"><use href="#bulb"/></svg>
<div class="t" style="left:1196px;top:188px;letter-spacing:0.147px">PointLight</div>
<div class="ra" style="left:1135px;top:209px"></div>
<svg style="left:1153px;top:207px" width="13" height="13"><use href="#cube"/></svg>
<div class="t" style="left:1176px;top:206px;letter-spacing:0.746px">Elephant-geom-2</div>
<div class="ra" style="left:1135px;top:227px"></div>
<svg style="left:1153px;top:225px" width="13" height="13"><use href="#cube"/></svg>
<div class="t" style="left:1176px;top:224px;letter-spacing:0.746px">Elephant-geom-3</div>
<div class="ra" style="left:1135px;top:245px"></div>
<svg style="left:1153px;top:243px" width="13" height="13"><use href="#cube"/></svg>
<div class="t" style="left:1176px;top:242px;letter-spacing:0.746px">Elephant-geom-4</div>
<div class="ra" style="left:1135px;top:263px"></div>
<svg style="left:1153px;top:261px" width="13" height="13"><use href="#cube"/></svg>
<div class="t" style="left:1176px;top:260px;letter-spacing:0.746px">Elephant-geom-5</div>
<div style="left:1131px;top:375px;width:283px;height:4px;background:#5a5a5a"></div>
<div style="left:1131px;top:379px;width:283px;height:19px;background:linear-gradient(#fbfbfb,#e4e4e4)"></div>
<div style="left:1131px;top:398px;width:283px;height:1px;background:#8a8a8a"></div>
<div class="t" style="left:1170px;top:379px;letter-spacing:-0.04px">Elephant-ogremesh – Properties</div>
<svg style="left:1382px;top:382px" width="12" height="12"><use href="#minb2"/></svg>
<svg style="left:1397px;top:382px" width="12" height="12"><use href="#closeb"/></svg>
<div style="left:1131px;top:399px;width:283px;height:20px;background:linear-gradient(#fcfcfc,#e9e9e9 50%,#dcdcdc)"></div>
<div class="da" style="left:1136px;top:406px"></div>
<div class="t" style="left:1154px;top:400px;font-size:13px;letter-spacing:0.275px">Spatial</div>
<div style="left:1131px;top:419px;width:283px;height:383px;background:#fff"></div>
<div style="left:1131px;top:438px;width:283px;height:1px;background:#e2e2e2"></div>
<div class="t" style="left:1131px;top:420px;font-size:12.5px;letter-spacing:0.58px">Vertexes</div>
<div class="t" style="left:1276px;top:420px;font-size:12.5px;letter-spacing:1.496px;color:#8c8c8c">5097</div>
<div style="left:1131px;top:458px;width:283px;height:1px;background:#e2e2e2"></div>
<div class="t" style="left:1131px;top:440px;font-size:12.5px;letter-spacing:0.718px">Triangles</div>
<div class="t" style="left:1276px;top:440px;font-size:12.5px;letter-spacing:1.296px;color:#8c8c8c">1699</div>
<div style="left:1131px;top:478px;width:283px;height:1px;background:#e2e2e2"></div>
<div class="t" style="left:1131px;top:460px;font-size:12.5px;letter-spacing:0.81px">World Translation</div>
<div class="t" style="left:1276px;top:460px;font-size:12.5px;letter-spacing:0.788px;color:#8c8c8c">[0.0, 0.0, 0.0]</div>
<div style="left:1131px;top:498px;width:283px;height:1px;background:#e2e2e2"></div>
<div class="t" style="left:1131px;top:480px;font-size:12.5px;letter-spacing:0.988px">World Totation</div>
<div class="t" style="left:1276px;top:480px;font-size:12.5px;letter-spacing:0.758px;color:#8c8c8c">[0.0, 0.0, 0.0, 1.0]</div>
<div style="left:1131px;top:518px;width:283px;height:1px;background:#e2e2e2"></div>
<div class="t" style="left:1131px;top:500px;font-size:12.5px;letter-spacing:0.453px">World Scale</div>
<div class="t" style="left:1276px;top:500px;font-size:12.5px;letter-spacing:0.788px;color:#8c8c8c">[1.0, 1.0, 1.0]</div>
<div style="left:1131px;top:538px;width:283px;height:1px;background:#e2e2e2"></div>
<div class="t" style="left:1131px;top:520px;font-size:12.5px;letter-spacing:0.762px">Local Translation</div>
<div class="t" style="left:1276px;top:520px;font-size:12.5px;letter-spacing:0.788px;color:#000">[0.0, 0.0, 0.0]</div>
<div style="left:1131px;top:558px;width:283px;height:1px;background:#e2e2e2"></div>
<div class="t" style="left:1131px;top:540px;font-size:12.5px;letter-spacing:0.698px">Local Rotation</div>
<div class="t" style="left:1276px;top:540px;font-size:12.5px;letter-spacing:0.758px;color:#000">[0.0, 0.0, 0.0, 1.0]</div>
<div style="left:1131px;top:578px;width:283px;height:1px;background:#e2e2e2"></div>
<div class="t" style="left:1131px;top:560px;font-size:12.5px;letter-spacing:0.367px">Local Scale</div>
<div class="t" style="left:1276px;top:560px;font-size:12.5px;letter-spacing:0.788px;color:#000">[1.0, 1.0, 1.0]</div>
<div style="left:1131px;top:598px;width:283px;height:1px;background:#e2e2e2"></div>
<div class="t" style="left:1131px;top:580px;font-size:12.5px;letter-spacing:0.625px">World Bound</div>
<div class="t" style="left:1276px;top:580px;font-size:12.5px;letter-spacing:0.623px;color:#8c8c8c">(No Property Editor)</div>
<div style="left:1131px;top:618px;width:283px;height:1px;background:#e2e2e2"></div>
<div class="t" style="left:1131px;top:600px;font-size:12.5px;letter-spacing:1.056px">Cull Hint</div>
<div class="t" style="left:1274px;top:600px;font-size:12.5px;letter-spacing:0.896px;color:#000">Dynamic</div>
<div style="left:1398px;top:603px;width:0;height:0;border-bottom:5px solid #111;border-left:4px solid transparent;border-right:4px solid transparent"></div>
<div style="left:1398px;top:610px;width:0;height:0;border-top:5px solid #111;border-left:4px solid transparent;border-right:4px solid transparent"></div>
<div style="left:1131px;top:638px;width:283px;height:1px;background:#e2e2e2"></div>
<div class="t" style="left:1131px;top:620px;font-size:12.5px;letter-spacing:0.836px">Local Cull Hint</div>
<div class="t" style="left:1274px;top:620px;font-size:12.5px;letter-spacing:0.875px;color:#8c8c8c">Inherit</div>
<div style="left:1398px;top:623px;width:0;height:0;border-bottom:5px solid #111;border-left:4px solid transparent;border-right:4px solid transparent"></div>
<div style="left:1398px;top:630px;width:0;height:0;border-top:5px solid #111;border-left:4px solid transparent;border-right:4px solid transparent"></div>
<div style="left:1131px;top:658px;width:283px;height:1px;background:#e2e2e2"></div>
<div class="t" style="left:1131px;top:640px;font-size:12.5px;letter-spacing:0.578px">Shadow Mode</div>
<div class="t" style="left:1274px;top:640px;font-size:12.5px;letter-spacing:1.273px;color:#000">Off</div>
<div style="left:1398px;top:643px;width:0;height:0;border-bottom:5px solid #111;border-left:4px solid transparent;border-right:4px solid transparent"></div>
<div style="left:1398px;top:650px;width:0;height:0;border-top:5px solid #111;border-left:4px solid transparent;border-right:4px solid transparent"></div>
<div style="left:1131px;top:678px;width:283px;height:1px;background:#e2e2e2"></div>
<div class="t" style="left:1131px;top:660px;font-size:12.5px;letter-spacing:0.564px">Local Shadow Mode</div>
<div class="t" style="left:1274px;top:660px;font-size:12.5px;letter-spacing:0.875px;color:#8c8c8c">Inherit</div>
<div style="left:1398px;top:663px;width:0;height:0;border-bottom:5px solid #111;border-left:4px solid transparent;border-right:4px solid transparent"></div>
<div style="left:1398px;top:670px;width:0;height:0;border-top:5px solid #111;border-left:4px solid transparent;border-right:4px solid transparent"></div>
<div style="left:1131px;top:698px;width:283px;height:1px;background:#e2e2e2"></div>
<div class="t" style="left:1131px;top:680px;font-size:12.5px;letter-spacing:0.825px">World Light List</div>
<div class="t" style="left:1276px;top:680px;font-size:12.5px;letter-spacing:0.623px;color:#8c8c8c">(No Property Editor)</div>
<div style="left:1131px;top:718px;width:283px;height:1px;background:#e2e2e2"></div>
<div class="t" style="left:1131px;top:700px;font-size:12.5px;letter-spacing:0.589px">Queue Bucket</div>
<div class="t" style="left:1274px;top:700px;font-size:12.5px;letter-spacing:0.583px;color:#000">Opaque</div>
<div style="left:1398px;top:703px;width:0;height:0;border-bottom:5px solid #111;border-left:4px solid transparent;border-right:4px solid transparent"></div>
<div style="left:1398px;top:710px;width:0;height:0;border-top:5px solid #111;border-left:4px solid transparent;border-right:4px solid transparent"></div>
<div style="left:1272px;top:419px;width:1px;height:300px;background:#e2e2e2"></div>
<div style="left:1131px;top:802px;width:283px;height:1px;background:#3f7ee0"></div>
<div style="left:1131px;top:803px;width:283px;height:7px;background:#e4e4e4"></div>
<div style="left:1131px;top:810px;width:283px;height:1px;background:#a0a0a0"></div>
<div style="left:1131px;top:811px;width:283px;height:64px;background:#e1e1e1"></div>
<div class="t" style="left:1133px;top:818px;font-weight:bold;font-size:13px;letter-spacing:0.853px;color:#111">Elephant-ogremesh</div>
<svg style="left:1386px;top:816px" width="23" height="23" viewBox="0 0 23 23"><defs><radialGradient id="qg" cx=".5" cy=".8" r=".7"><stop offset="0" stop-color="#fff"/><stop offset="1" stop-color="#ddd0f0"/></radialGradient></defs><circle cx="11.5" cy="11.5" r="10.5" fill="url(#qg)" stroke="#a88ad0" stroke-width="1.2"/><text x="11.5" y="16.5" font-family="Liberation Sans" font-weight="bold" font-size="14" fill="#555" text-anchor="middle">?</text></svg>
